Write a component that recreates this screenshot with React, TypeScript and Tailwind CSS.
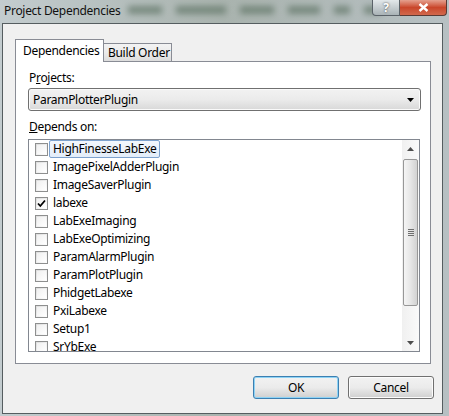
const items = [
  { name: "HighFinesseLabExe", checked: false },
  { name: "ImagePixelAdderPlugin", checked: false },
  { name: "ImageSaverPlugin", checked: false },
  { name: "labexe", checked: true },
  { name: "LabExeImaging", checked: false },
  { name: "LabExeOptimizing", checked: false },
  { name: "ParamAlarmPlugin", checked: false },
  { name: "ParamPlotPlugin", checked: false },
  { name: "PhidgetLabexe", checked: false },
  { name: "PxiLabexe", checked: false },
  { name: "Setup1", checked: false },
  { name: "SrYbExe", checked: false },
];

const CheckBox = ({ checked }: { checked: boolean }) => (
  <div className="w-[13px] h-[13px] border border-[#8e8f8f] bg-gradient-to-br from-[#dcdcdc] to-white flex items-center justify-center shrink-0">
    <div className="w-[9px] h-[9px] bg-gradient-to-br from-[#f0f0f0] to-white flex items-center justify-center">
      {checked && (
        <svg width="9" height="9" viewBox="0 0 9 9">
          <path d="M1 4.5 L3.3 7 L8 1.5" stroke="#000" strokeWidth="1.8" fill="none" />
        </svg>
      )}
    </div>
  </div>
);

const Row = ({ name, checked, focused }: { name: string; checked: boolean; focused?: boolean }) => (
  <div className="h-[18px] flex items-center pl-[6px] shrink-0">
    <CheckBox checked={checked} />
    <div
      className={
        focused
          ? "ml-[1px] h-[18px] flex items-center px-[3px] border border-[#7da2ce] rounded-[2px] bg-gradient-to-b from-[#f2f7fd] to-[#e3edf9]"
          : "ml-[1px] h-[18px] flex items-center px-[4px]"
      }
    >
      {name}
    </div>
  </div>
);

const ScrollBar = () => (
  <div className="w-[17px] h-full bg-gradient-to-r from-[#f0f0f0] to-[#fafafa] flex flex-col items-center shrink-0">
    <div className="h-[17px] w-full flex items-center justify-center">
      <svg width="7" height="4" viewBox="0 0 7 4">
        <path d="M3.5 0 L7 4 L0 4 Z" fill="#4d4d4d" />
      </svg>
    </div>
    <div className="w-[15px] h-[147px] mt-[2px] rounded-[2px] border border-[#979797] bg-gradient-to-r from-[#f5f5f5] via-[#e6e6e6] to-[#d2d2d2] flex items-center justify-center">
      <div className="flex flex-col gap-[1px]">
        {[0, 1, 2, 3].map((i) => (
          <div key={i} className="w-[6px] h-[1px] bg-[#6e6e6e]" />
        ))}
      </div>
    </div>
    <div className="flex-1" />
    <div className="h-[17px] w-full flex items-center justify-center">
      <svg width="7" height="4" viewBox="0 0 7 4">
        <path d="M0 0 L7 0 L3.5 4 Z" fill="#4d4d4d" />
      </svg>
    </div>
  </div>
);

const Button = ({ label, isDefault }: { label: string; isDefault?: boolean }) => (
  <div
    className={
      "w-[86px] h-[23px] rounded-[3px] border flex items-center justify-center bg-gradient-to-b from-[#f2f2f2] via-[#ebebeb] to-[#cfcfcf] " +
      (isDefault ? "border-[#3c7fb1] shadow-[inset_0_0_0_1px_#8ed3f5]" : "border-[#707070] shadow-[inset_0_0_0_1px_#fcfcfc]")
    }
  >
    {label}
  </div>
);

const App = () => {
  return (
    <div
      className="w-[449px] h-[416px] flex flex-col bg-gradient-to-r from-[#c3cccf] via-[#a9b3ae] to-[#b7c0c3] text-[12px] tracking-[-0.3px] text-black"
      style={{ fontFamily: "'Noto Sans', 'Open Sans', sans-serif" }}
    >
      {/* title bar */}
      <div className="h-[23px] flex items-start shrink-0 relative overflow-hidden">
        <div className="flex items-center gap-[14px] pt-[6px] pl-[128px] blur-[3px] opacity-70">
          <div className="w-[34px] h-[8px] bg-[#5f7465]" />
          <div className="w-[50px] h-[8px] bg-[#5f7465]" />
          <div className="w-[34px] h-[8px] bg-[#5f7465]" />
          <div className="w-[32px] h-[8px] bg-[#5f7465]" />
          <div className="w-[16px] h-[8px] bg-[#5f7465]" />
          <div className="w-[18px] h-[8px] bg-[#5f7465]" />
        </div>
        <div className="absolute left-[4px] top-[3px] leading-[16px] text-[#111]">Project Dependencies</div>
        <div className="absolute right-[2px] top-0 flex">
          <div className="w-[28px] h-[16px] rounded-bl-[4px] border border-t-0 border-[#5a6268] bg-gradient-to-b from-[#e3e8ea] to-[#a9b3b6] flex items-center justify-center text-white font-bold text-[12px] leading-none [text-shadow:0_0_2px_#333]">
            ?
          </div>
          <div className="w-[47px] h-[16px] rounded-br-[4px] border border-l-0 border-t-0 border-[#5a3a34] bg-gradient-to-b from-[#e4a08f] via-[#c9462b] to-[#d1684c] flex items-center justify-center">
            <svg width="11" height="9" viewBox="0 0 11 9">
              <path d="M1.5 1 L9.5 8 M9.5 1 L1.5 8" stroke="#fff" strokeWidth="2.4" />
            </svg>
          </div>
        </div>
      </div>

      {/* client area */}
      <div className="flex-1 ml-[2px] mr-[6px] mb-[2px] border border-[#555d60] bg-[#f0f0f0] flex flex-col">
        {/* tabs */}
        <div className="flex items-end pl-[12px] pt-[14px] h-[37px] shrink-0">
          <div className="w-[89px] h-[23px] bg-white border border-b-0 border-[#898c95] flex items-start pl-[7px] pt-[2px] relative z-10 -mb-[1px] whitespace-nowrap">
            Dependencies
          </div>
          <div className="w-[68px] h-[18px] bg-gradient-to-b from-[#f3f3f3] via-[#ebebeb] to-[#dcdcdc] border border-l-0 border-b-0 border-[#898c95] flex items-center pl-[4px] whitespace-nowrap">
            Build Order
          </div>
        </div>

        {/* tab page */}
        <div className="ml-[12px] w-[416px] h-[303px] bg-white border border-[#898c95] flex flex-col px-[12px] shrink-0">
          <div className="h-[26px] flex items-end pb-[1px] pl-[1px]">
            <span>
              P<span className="underline">r</span>ojects:
            </span>
          </div>
          <div className="h-[23px] w-[393px] rounded-[3px] border border-[#707070] bg-gradient-to-b from-[#f2f2f2] via-[#ebebeb] to-[#d8d8d8] shadow-[inset_0_0_0_1px_#fafafa] flex items-center pl-[4px] pr-[6px]">
            <span className="flex-1">ParamPlotterPlugin</span>
            <svg width="7" height="4" viewBox="0 0 7 4">
              <path d="M0 0 L7 0 L3.5 4 Z" fill="#000" />
            </svg>
          </div>
          <div className="h-[28px] flex items-end pb-[3px] pl-[1px]">
            <span>
              <span className="underline">D</span>epends on:
            </span>
          </div>
          <div className="w-[392px] h-[213px] border border-[#828790] bg-white flex">
            <div className="flex-1 flex flex-col overflow-hidden">
              {items.map((it, i) => (
                <Row key={it.name} name={it.name} checked={it.checked} focused={i === 0} />
              ))}
            </div>
            <ScrollBar />
          </div>
        </div>

        {/* buttons */}
        <div className="flex justify-end gap-[9px] pr-[8px] pt-[12px]">
          <Button label="OK" isDefault />
          <Button label="Cancel" />
        </div>
      </div>
    </div>
  );
};

export default App;
